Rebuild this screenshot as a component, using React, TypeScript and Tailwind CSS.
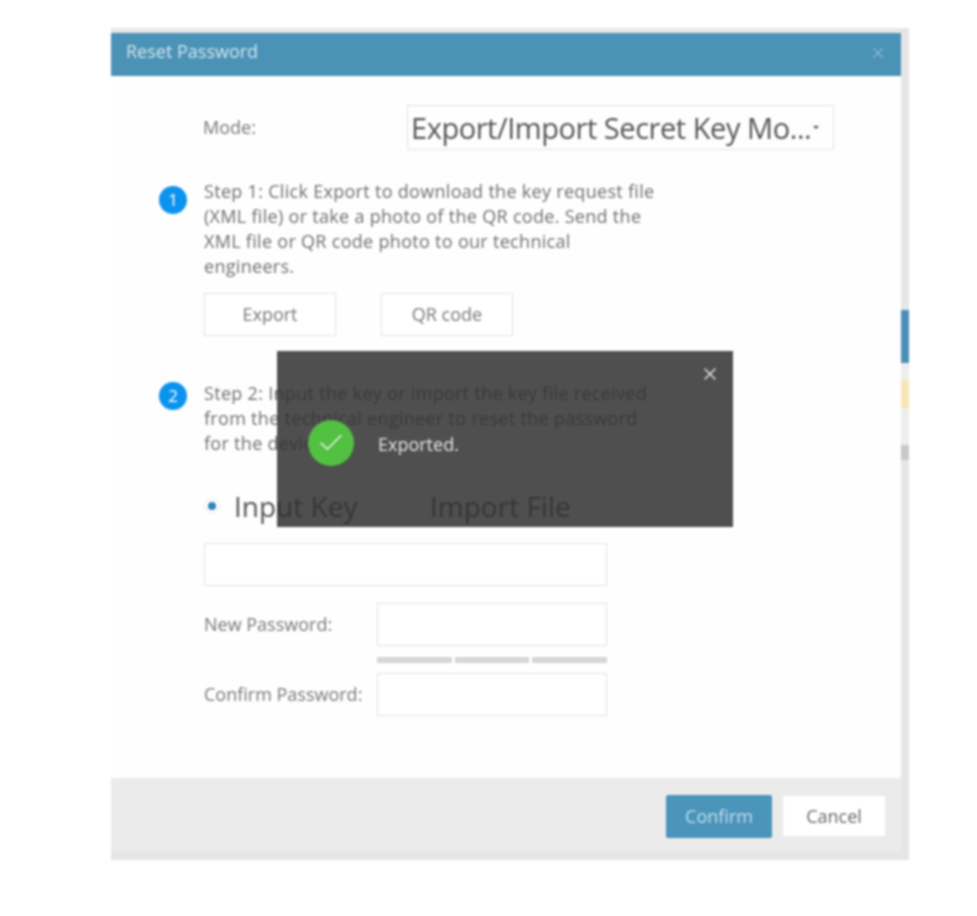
import { Check, X } from "lucide-react";

const font = { sans: "font-['Open_Sans','Noto_Sans',sans-serif]" };

function StepBadge({ n }: { n: number }) {
  return (
    <div className="w-[28px] h-[28px] rounded-full bg-[#0b93ee] text-white text-[17px] leading-[28px] text-center shrink-0">
      {n}
    </div>
  );
}

function Field({ className }: { className: string }) {
  return <div className={`h-[43px] bg-white border border-[#e2e2e2] ${className}`} />;
}

export default function App() {
  return (
    <div className={`w-[977px] h-[916px] bg-white pt-[28px] pl-[111px] blur-[0.9px] ${font.sans}`}>
      <div className="relative w-[798px] h-[832px] bg-[#e6e6e6] pt-[5px] flex">
        {/* dialog */}
        <div className="w-[790px] h-[818px] bg-[#fefefe] flex flex-col">
          <div className="h-[43px] shrink-0 bg-[#4b92b7] flex items-center justify-between pl-[15px] pr-[14px]">
            <span className="text-[18px] leading-[24px] mb-[7px] text-[#d5e6ee]">Reset Password</span>
            <X className="w-[18px] h-[18px] mb-[4px] text-[#8fbcd3]" strokeWidth={1.5} />
          </div>

          <div className="flex-1 pl-[48px]">
            {/* mode */}
            <div className="flex items-center mt-[29px] pl-[44px]">
              <span className="w-[204px] text-[18px] text-[#777]">Mode:</span>
              <div className="w-[427px] h-[45px] border border-[#e4e4e4] flex items-center pl-[3px] gap-[2px]">
                <span className="text-[29px] leading-none text-[#555] tracking-[-0.45px] whitespace-nowrap">
                  Export/Import Secret Key Mo...
                </span>
                <span className="w-0 h-0 border-x-[3px] border-x-transparent border-t-[3px] border-t-[#444]" />
              </div>
            </div>

            {/* step 1 */}
            <div className="flex gap-[17px] mt-[29px]">
              <div className="mt-[7px]">
                <StepBadge n={1} />
              </div>
              <div>
                <p className="w-[500px] text-[18px] leading-[25px] text-[#6f6f6f] tracking-[0.3px]">
                  Step 1: Click Export to download the key request file
                  <br />
                  (XML file) or take a photo of the QR code. Send the
                  <br />
                  XML file or QR code photo to our technical
                  <br />
                  engineers.
                </p>
                <div className="flex gap-[45px] mt-[14px]">
                  <button className="w-[132px] h-[43px] bg-white border border-[#e2e2e2] text-[18px] text-[#777]">Export</button>
                  <button className="w-[132px] h-[43px] bg-white border border-[#e2e2e2] text-[18px] text-[#777]">QR code</button>
                </div>
              </div>
            </div>

            {/* step 2 */}
            <div className="flex gap-[17px] mt-[45px]">
              <div className="mt-[1px]">
                <StepBadge n={2} />
              </div>
              <div>
                <p className="w-[500px] text-[18px] leading-[25px] text-[#6f6f6f] tracking-[0.3px]">
                  Step 2: Input the key or import the key file received
                  <br />
                  from the technical engineer to reset the password
                  <br />
                  for the device.
                </p>
                <div className="flex items-center h-[40px] mt-[30px]">
                  <span className="w-[16px] h-[16px] rounded-full border border-[#eeeeee] flex items-center justify-center">
                    <span className="w-[8px] h-[8px] rounded-full bg-[#2f86b5]" />
                  </span>
                  <span className="ml-[14px] w-[166px] text-[28px] leading-none text-[#555]">Input Key</span>
                  <span className="w-[16px] h-[16px] rounded-full border border-[#e2e2e2]" />
                  <span className="ml-[14px] text-[28px] leading-none text-[#555]">Import File</span>
                </div>
                <Field className="w-[403px] mt-[17px]" />
                <div className="flex items-center mt-[17px]">
                  <span className="w-[173px] text-[18px] text-[#777] whitespace-nowrap">New Password:</span>
                  <Field className="w-[230px]" />
                </div>
                <div className="flex gap-[3px] w-[230px] ml-[173px] mt-[11px]">
                  <div className="flex-1 h-[6px] bg-[#d6d6d6]" />
                  <div className="flex-1 h-[6px] bg-[#d6d6d6]" />
                  <div className="flex-1 h-[6px] bg-[#d6d6d6]" />
                </div>
                <div className="flex items-center mt-[10px]">
                  <span className="w-[173px] text-[18px] text-[#777] whitespace-nowrap">Confirm Password:</span>
                  <Field className="w-[230px]" />
                </div>
              </div>
            </div>
          </div>

          {/* footer */}
          <div className="h-[73px] shrink-0 bg-[#ebebeb] flex items-center justify-end gap-[11px] pr-[16px] pt-[3px]">
            <button className="w-[106px] h-[43px] rounded-[2px] bg-[#4b94ba] text-[18px] text-[#c5dfeb]">Confirm</button>
            <button className="w-[102px] h-[40px] bg-white text-[18px] text-[#666]">Cancel</button>
          </div>
        </div>

        {/* what peeks out behind the dialog on the right */}
        <div className="w-[8px] flex flex-col">
          <div className="h-[277px] bg-[#e6e6e6]" />
          <div className="h-[53px] bg-[#4b8fb8]" />
          <div className="h-[17px] bg-[#eeeeee]" />
          <div className="h-[28px] bg-[#f5e6b4]" />
          <div className="h-[37px] bg-[#eeeeee]" />
          <div className="h-[15px] bg-[#c8c8c8]" />
          <div className="flex-1 bg-[#e6e6e6]" />
        </div>

        {/* toast */}
        <div className="absolute left-[166px] top-[323px] w-[456px] h-[176px] bg-[#303030]/85 flex items-center pl-[31px]">
          <X className="absolute right-[13px] top-[13px] w-[20px] h-[20px] text-[#e8e8e8]" strokeWidth={1.6} />
          <div className="w-[46px] h-[46px] rounded-full bg-[#52c041] flex items-center justify-center mt-[8px]">
            <Check className="w-[30px] h-[30px] text-[#e8f6e4]" strokeWidth={1.3} />
          </div>
          <span className="ml-[24px] text-[18px] text-[#e6e6e6] mt-[10px]">Exported.</span>
        </div>
      </div>
    </div>
  );
}
